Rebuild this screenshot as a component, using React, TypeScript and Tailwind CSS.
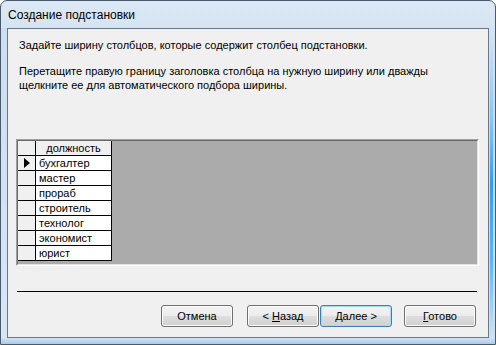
import { ReactNode } from 'react';

const rows = ["бухгалтер", "мастер", "прораб", "строитель", "технолог", "экономист", "юрист"];

const font = { fontFamily: '"Liberation Sans", Arial, sans-serif' };

const WizardButton = ({ children, focused }: { children: ReactNode, focused?: boolean }) => (
    <button
        className={
            "w-[72px] h-[22px] rounded-[3px] border text-[11px] text-black leading-none flex items-center justify-center " +
            "bg-[linear-gradient(#f3f3f3_0%,#ececec_48%,#dddddd_52%,#d0d0d0_100%)] " +
            (focused
                ? "border-[#3c7fb1] shadow-[inset_0_0_0_1px_#9fdcf8]"
                : "border-[#707070] shadow-[inset_0_0_0_1px_#fbfbfb]")
        }
    >
        <span className="whitespace-pre">{children}</span>
    </button>
);

const LookupGrid = () => (
    <div className="ml-[8px] w-[463px] h-[127px] border-t border-l border-[#a0a0a0] border-b border-r border-b-white border-r-white">
        <div className="h-full border-t border-l border-[#696969] border-b border-r border-b-[#e3e3e3] border-r-[#e3e3e3] bg-[#ababab]">
            <div className="w-[94px] text-[11px] text-[#000]">
                {/* header */}
                <div className="flex h-[15px] border-b border-black">
                    <div className="w-[18px] border-r border-black bg-[#f0f0f0]" />
                    <div className="w-[76px] border-r border-black bg-[#f0f0f0] flex items-center justify-center leading-none">
                        должность
                    </div>
                </div>
                {rows.map((name, i) => (
                    <div key={i} className="flex h-[15px] border-b border-black">
                        <div className="w-[18px] border-r border-black bg-[#f0f0f0] flex items-center justify-center">
                            {i === 0 && (
                                <svg width="6" height="10" viewBox="0 0 6 10">
                                    <path d="M0 0 L6 5 L0 10 Z" fill="#000" />
                                </svg>
                            )}
                        </div>
                        <div className="w-[76px] border-r border-black bg-white pl-[3px] flex items-center leading-none">
                            {name}
                        </div>
                    </div>
                ))}
            </div>
        </div>
    </div>
);

export default function App() {
    return (
        <div style={font} className="w-[496px] h-[345px] flex flex-col rounded-t-[7px] border border-[#4b5a6b] bg-[linear-gradient(#dbe8f5,#c8dbee_30%,#cfdff0)] overflow-hidden">
            {/* title bar */}
            <div className="h-[27px] pl-[7px] flex items-center text-[12px] text-black">
                Создание подстановки
            </div>

            <div className="flex">
                <div className="w-[6px] bg-[linear-gradient(#cddef0,#d8e6f4)]" />

                {/* client area */}
                <div className="w-[482px] h-[310px] border border-[#6b7785] bg-[#f0f0f0] flex flex-col text-[11px] text-black">
                    <p className="pt-[9px] pl-[11px] leading-[14px]">
                        Задайте ширину столбцов, которые содержит столбец подстановки.
                    </p>
                    <p className="mt-[12px] pl-[11px] leading-[14px]">
                        Перетащите правую границу заголовка столбца на нужную ширину или дважды<br />
                        щелкните ее для автоматического подбора ширины.
                    </p>

                    <div className="mt-[47px]">
                        <LookupGrid />
                    </div>

                    <div className="mt-[25px] ml-[9px] w-[460px] h-px bg-black" />

                    <div className="mt-[13px] flex justify-end pr-[12px]">
                        <WizardButton>Отмена</WizardButton>
                        <div className="w-[14px]" />
                        <WizardButton>{"< "}<u>Н</u>азад</WizardButton>
                        <div className="w-[1px]" />
                        <WizardButton focused><u>Д</u>{"алее >"}</WizardButton>
                        <div className="w-[12px]" />
                        <WizardButton><u>Г</u>отово</WizardButton>
                    </div>
                </div>

                {/* right frame with glass streak */}
                <div className="w-[6px] pl-[1px]">
                    <div className="w-[3px] h-full bg-[linear-gradient(#d6e5f4_0%,#8cc4f0_30%,#2f9ff0_50%,#5ab6f2_75%,#cfe2f3_100%)]" />
                </div>
            </div>

            <div className="flex-1 bg-[linear-gradient(#d2e2f2,#a9cbe9)]" />
        </div>
    );
}
